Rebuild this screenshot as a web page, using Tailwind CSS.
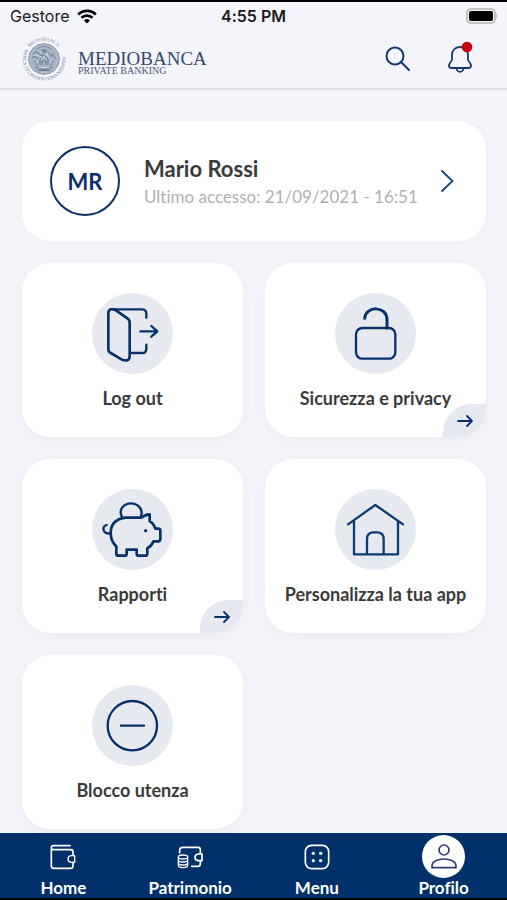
<!DOCTYPE html>
<html lang="it">
<head>
<meta charset="utf-8">
<meta name="viewport" content="width=device-width, initial-scale=1">
<title>Mediobanca Private Banking – Profilo</title>
<script src="https://cdn.jsdelivr.net/npm/@tailwindcss/browser@4"></script>
</head>
<body class="min-h-screen flex flex-col bg-[#f4f5fa] border-y-2 border-black font-['Lato',sans-serif] [font-variant-ligatures:none] text-[#3a3a3a]">

<header class="border-b-2 border-[#dddfe4]">
  <div class="grid grid-cols-3 items-center h-7 px-[10px] font-['Inter',sans-serif] text-[#1b1b1d]">
    <div class="flex items-center gap-2 text-[16px]">
      <span>Gestore</span>
      <svg class="w-5 h-[15px]" viewBox="0 0 20 15" fill="none" stroke="#000" aria-hidden="true">
        <path d="M1.2 5.4a12.6 12.6 0 0 1 17.6 0" stroke-width="2.8"/>
        <path d="M4.500 8.800a8 8 0 0 1 11 0" stroke-width="2.600"/>
        <path d="M10 14.500l-3-3a4.400 4.400 0 0 1 6 0z" fill="#000" stroke="none"/>
      </svg>
    </div>
    <div class="text-center text-[16px] font-semibold">4:55 PM</div>
    <svg class="justify-self-end w-[31px] h-4" viewBox="0 0 31 16" aria-hidden="true">
      <rect x="1" y="1" width="28" height="14" rx="4" fill="#f4f5fa" stroke="#b0b1b4" stroke-width="1.600"/>
      <rect x="3" y="3" width="24" height="10" rx="2" fill="#000"/>
      <path d="M30 5.500q2 2.500 0 5z" fill="#b0b1b4"/>
    </svg>
  </div>
  <div class="flex items-center justify-between h-[58px] pl-[22px] pr-[34px]">
    <div class="flex items-center gap-3">
      <svg class="size-11 overflow-visible" viewBox="0 0 132 132" aria-hidden="true">
        <defs>
          <path id="ring-top" d="M23 31A55 55 0 0 1 113 38"/>
          <path id="ring-bottom" d="M10 36A64 64 0 1 0 122 36"/>
        </defs>
        <circle cx="66" cy="66" r="46" fill="#a9b3c4" stroke="#8593ab" stroke-width="3"/>
        <circle cx="66" cy="66" r="41" fill="none" stroke="#d5dae3" stroke-width="2" stroke-dasharray="3 3"/>
        <g fill="none" stroke="#62718d" stroke-width="3">
          <path d="M34 50q8-10 16 0t16 0 16 0 16 0M30 62q9-8 18 2M84 64q9-10 18 0M40 90q26 14 52 0M46 100h40"/>
          <path d="M66 36v12M58 40h16M54 84V66l12-12 12 12v18M60 84V72h12v12M38 72l8 14M94 72l-8 14"/>
          <path d="M44 36q22-16 44 0" stroke-width="2"/>
        </g>
        <g fill="none" stroke="#e4e8ef" stroke-width="2">
          <path d="M36 56q10-8 18 2t12-2 12 2 18-2M40 80l10-8M92 80l-10-8M50 92h32M52 44l6 6M80 44l-6 6"/>
        </g>
        <g class="font-['Liberation_Serif',serif]" fill="#7484a0">
          <text class="text-[14px]"><textPath href="#ring-top">MEDIOBANCA</textPath></text>
          <text class="text-[15px]"><textPath href="#ring-bottom">BANCA DI CREDITO FINANZIARIO</textPath></text>
        </g>
      </svg>
      <div class="font-['Liberation_Serif',serif] pt-2">
        <div class="text-[19px] leading-4 text-[#36486e]">MEDIOBANCA</div>
        <div class="text-[10px] leading-2 text-[#4a5a7c]">PRIVATE BANKING</div>
      </div>
    </div>
    <div class="flex items-center gap-9">
      <button type="button" aria-label="Cerca">
        <svg class="w-[26px] h-8" viewBox="0 0 26 32" fill="none" stroke="#14396f" stroke-width="2" stroke-linecap="round" aria-hidden="true">
          <circle cx="10" cy="13" r="8.500"/><path d="M16.200 19.200L24 27"/>
        </svg>
      </button>
      <button type="button" aria-label="Notifiche">
        <svg class="w-[26px] h-8 overflow-visible" viewBox="0 0 26 32" fill="none" stroke="#14396f" stroke-width="1.800" stroke-linejoin="round" aria-hidden="true">
          <path d="M13 4C7.500 4 5 8 5 12v4c0 2.500-3 4-3 6.500C2 24 3 25 4.500 25h17c1.500 0 2.500-1 2.500-2.500C24 20 21 18.500 21 16v-4c0-4-2.500-8-8-8z"/>
          <path d="M9.500 25a3.500 3.800 0 0 0 7 0"/>
          <circle cx="20" cy="4" r="5.300" fill="#c90009" stroke="none"/>
        </svg>
      </button>
    </div>
  </div>
</header>

<main class="flex-1 flex flex-col gap-[22px] pt-[31px] pl-[22px] pr-[21px] pb-1">
  <a href="#profilo" class="flex items-center h-[120px] rounded-[28px] bg-white pl-7 pr-8 shadow-[0_2px_12px_rgba(40,60,100,0.03)]">
    <span class="flex items-center justify-center size-[70px] shrink-0 rounded-full border-2 border-[#0b2f68] text-[22px] font-bold text-[#0b2f68]">MR</span>
    <span class="ml-6 flex-1 flex flex-col pt-1">
      <span class="text-[22px] leading-7 font-bold">Mario Rossi</span>
      <span class="text-[17px] leading-7 text-[#b0b0b0]">Ultimo accesso: 21/09/2021 - 16:51</span>
    </span>
    <svg class="w-[14px] h-6" viewBox="0 0 14 24" fill="none" stroke="#14457e" stroke-width="1.800" aria-hidden="true"><path d="M1.500 1.500L12.500 12 1.500 22.500"/></svg>
  </a>

  <section class="grid grid-cols-2 gap-[22px]" aria-label="Impostazioni profilo">
    <button type="button" class="relative flex flex-col items-center h-[174px] pt-[30px] rounded-[28px] bg-white shadow-[0_4px_16px_rgba(40,60,100,0.05)]">
      <svg class="size-[81px] rounded-full bg-[#e6eaf0]" viewBox="0 0 243 243" fill="none" stroke="#06316b" stroke-width="8" stroke-linecap="round" stroke-linejoin="round" aria-hidden="true">
        <path d="M49 62v106q0 8 7 12l34 20q23 8 23-12V88q0-8-7-12L72 52Q49 42 49 62z"/>
        <path d="M64 49h86q13 0 13 13v12M116 180h34q13 0 13-13v-12" stroke-width="7"/>
        <path d="M145 115h50M178 99l18 16-18 16" stroke-width="7"/>
      </svg>
      <span class="mt-3 text-[18px] leading-6 font-bold">Log out</span>
    </button>

    <button type="button" class="relative flex flex-col items-center h-[174px] pt-[30px] rounded-[28px] bg-white shadow-[0_4px_16px_rgba(40,60,100,0.05)]">
      <svg class="size-[81px] rounded-full bg-[#e6eaf0]" viewBox="0 0 243 243" fill="none" stroke="#06316b" stroke-width="7" stroke-linecap="round" aria-hidden="true">
        <rect x="63" y="105" width="118" height="92" rx="19"/>
        <path d="M89 76C92 37 156 38 156 80v25" stroke-width="9"/>
      </svg>
      <span class="mt-3 text-[18px] leading-6 font-bold">Sicurezza e privacy</span>
      <span class="absolute right-0 bottom-0 flex items-center justify-center w-[43px] h-[33px] rounded-tl-[28px] rounded-br-[28px] bg-[#e6eaf0]">
        <svg class="w-4 h-3" viewBox="0 0 16 12" fill="none" stroke="#06316b" stroke-width="1.800" stroke-linecap="round" stroke-linejoin="round" aria-hidden="true"><path d="M1 6h14M10 1l5 5-5 5"/></svg>
      </span>
    </button>

    <button type="button" class="relative flex flex-col items-center h-[174px] pt-[30px] rounded-[28px] bg-white shadow-[0_4px_16px_rgba(40,60,100,0.05)]">
      <svg class="size-[81px] rounded-full bg-[#e6eaf0]" viewBox="0 0 243 243" fill="none" stroke="#06316b" stroke-width="8" stroke-linecap="round" stroke-linejoin="round" aria-hidden="true">
        <path d="M149 86h-49Q56 92 56 133q1 25 17 39v22q0 6 6 6h19q6 0 6-6v-12h30v12q0 6 6 6h20q6 0 6-6v-16q14-8 18-21h14q7 0 7-7v-25q0-6-7-6h-8q-6-17-17-22V76q-15 1-24 10z"/>
        <path d="M90 84C78 62 96 43 117 43s39 19 29 41" stroke-width="7"/>
        <path d="M44 108q-12 4-9 16 5 12 21 9" stroke-width="7"/>
        <circle cx="161" cy="125" r="5" fill="#06316b" stroke="none"/>
      </svg>
      <span class="mt-3 text-[18px] leading-6 font-bold">Rapporti</span>
      <span class="absolute right-0 bottom-0 flex items-center justify-center w-[43px] h-[33px] rounded-tl-[28px] rounded-br-[28px] bg-[#e6eaf0]">
        <svg class="w-4 h-3" viewBox="0 0 16 12" fill="none" stroke="#06316b" stroke-width="1.800" stroke-linecap="round" stroke-linejoin="round" aria-hidden="true"><path d="M1 6h14M10 1l5 5-5 5"/></svg>
      </span>
    </button>

    <button type="button" class="relative flex flex-col items-center h-[174px] pt-[30px] rounded-[28px] bg-white shadow-[0_4px_16px_rgba(40,60,100,0.05)]">
      <svg class="size-[81px] rounded-full bg-[#e6eaf0]" viewBox="0 0 243 243" fill="none" stroke="#0b3b74" stroke-width="7" stroke-linecap="round" stroke-linejoin="round" aria-hidden="true">
        <path d="M39 106l82-58 83 58M57 96v100h132V96M96 196v-46q0-20 20-20h10q20 0 20 20v46"/>
      </svg>
      <span class="mt-3 text-[18px] leading-6 font-bold">Personalizza la tua app</span>
    </button>

    <button type="button" class="relative flex flex-col items-center h-[174px] pt-[30px] rounded-[28px] bg-white shadow-[0_4px_16px_rgba(40,60,100,0.05)]">
      <svg class="size-[81px] rounded-full bg-[#e6eaf0]" viewBox="0 0 243 243" fill="none" stroke="#06316b" stroke-width="7" stroke-linecap="round" aria-hidden="true">
        <circle cx="121" cy="122" r="74"/><path d="M87 122h69"/>
      </svg>
      <span class="mt-3 text-[18px] leading-6 font-bold">Blocco utenza</span>
    </button>
  </section>
</main>

<nav class="sticky bottom-0 grid grid-cols-4 h-[65px] bg-[#02306a] text-white text-[17px] leading-5 font-bold" aria-label="Navigazione principale">
  <a href="#home" class="flex flex-col items-center pt-[2px]">
    <span class="flex items-center justify-center size-[43px]">
      <svg class="size-[26px]" viewBox="0 0 78 78" fill="none" stroke="#fff" stroke-width="5" stroke-linecap="round" stroke-linejoin="round" aria-hidden="true">
        <path d="M60 5H11q-7 0-7 6t7 6h51q7 0 7 7v9M4 12v53q0 8 8 8h49q8 0 8-8V55"/>
        <path d="M74 35H63q-9 1-9 10t9 10h11z" stroke-width="4"/>
      </svg>
    </span>
    <span>Home</span>
  </a>
  <a href="#patrimonio" class="flex flex-col items-center pt-[2px]">
    <span class="flex items-center justify-center size-[43px]">
      <svg class="size-[26px]" viewBox="0 0 78 78" fill="none" stroke="#fff" stroke-width="5" stroke-linecap="round" stroke-linejoin="round" aria-hidden="true">
        <path d="M8 26V20q0-10 10-10h45q7 0 7 7v12M70 51v8q0 8-8 8H44"/>
        <path d="M75 30H63q-9 1-9 10t9 10h12z"/>
        <path d="M4 40v24c0 9 28 9 28 0V40M4 48c0 8 28 8 28 0M4 57c0 8 28 8 28 0" stroke-width="4"/>
        <ellipse cx="18" cy="39" rx="14" ry="6" stroke-width="4"/>
      </svg>
    </span>
    <span>Patrimonio</span>
  </a>
  <a href="#menu" class="flex flex-col items-center pt-[2px]">
    <span class="flex items-center justify-center size-[43px]">
      <svg class="size-[26px]" viewBox="0 0 78 78" fill="none" stroke="#fff" stroke-width="5" aria-hidden="true">
        <rect x="4" y="4" width="70" height="70" rx="19"/>
        <g fill="#fff" stroke="none"><circle cx="28" cy="28" r="5"/><circle cx="50" cy="28" r="5"/><circle cx="28" cy="50" r="5"/><circle cx="50" cy="50" r="5"/></g>
      </svg>
    </span>
    <span>Menu</span>
  </a>
  <a href="#profilo" aria-current="page" class="flex flex-col items-center pt-[2px]">
    <span class="flex items-center justify-center size-[43px] rounded-full bg-white">
      <svg class="size-[26px]" viewBox="0 0 78 78" fill="none" stroke="#2d3d70" stroke-width="5" stroke-linejoin="round" aria-hidden="true">
        <circle cx="39" cy="18" r="15"/>
        <path d="M3 71V66c0-28 72-28 72 0v5z"/>
      </svg>
    </span>
    <span>Profilo</span>
  </a>
</nav>
</body>
</html>
